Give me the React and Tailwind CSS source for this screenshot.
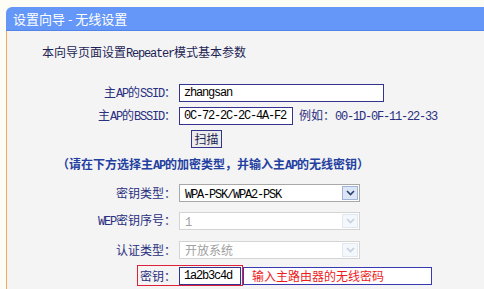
import React from "react";

// SimSun-like half-width latin: 6px per char
const M = ({ children }) => (
  <span className="font-['Liberation_Mono',monospace] text-[12px] tracking-[-1.2px]">{children}</span>
);

const Label = ({ children }) => (
  <div className="w-[172px] pr-[3px] text-right text-[#2a2f80] leading-[18px]">{children}</div>
);

const TextBox = ({ value, w }) => (
  <input
    readOnly
    value={value}
    className={`${w} h-[18px] border border-[#34348f] bg-white px-[4px] text-[12px] tracking-[-1.2px] leading-[16px] text-black font-['Liberation_Mono',monospace] outline-none`}
  />
);

const Arrow = ({ disabled }) => (
  <div
    className={`absolute right-[1px] top-[1px] bottom-[1px] w-[16px] flex items-center justify-center border ${
      disabled ? "border-[#e2e8f0] bg-[#f4f7fb]" : "border-[#9fb4d8] bg-[#dce6f5]"
    }`}
  >
    <svg width="9" height="6" viewBox="0 0 9 6">
      <path
        d="M1 1 L4.5 4.5 L8 1"
        fill="none"
        stroke={disabled ? "#c5cfdc" : "#2d3f6e"}
        strokeWidth="1.6"
      />
    </svg>
  </div>
);

const SelectBox = ({ children, disabled }) => (
  <div
    className={`relative w-[181px] h-[18px] border bg-white pl-[5px] text-[12px] leading-[16px] ${
      disabled ? "border-[#d4d4d4] text-[#a0a0a0]" : "border-[#a8a8a8] text-black"
    }`}
  >
    {children}
    <Arrow disabled={disabled} />
  </div>
);

export default function App() {
  return (
    <div className="w-[484px] h-[289px] overflow-hidden bg-[#fdfdf6] pt-[7px] pl-[6px] text-[12px] font-['Noto_Sans_CJK_SC',sans-serif]">
      <div className="h-[24px] rounded-tl-[6px] bg-[#6497f7] border-b border-[#5283e6] pl-[7px] flex items-center text-white text-[13px]">
        设置向导 - 无线设置
      </div>
      <div className="h-[260px] border-l border-[#f2ac5c] bg-[#f4f4f4] pt-[13px]">
        <div className="pl-[35px] leading-[16px] text-[#1d1f55]">
          本向导页面设置<M>Repeater</M>模式基本参数
        </div>

        <div className="mt-[21px] flex items-center">
          <Label>
            主<M>AP</M>的<M>SSID</M>：
          </Label>
          <TextBox value="zhangsan" w="w-[205px]" />
        </div>
        <div className="mt-[3px] flex items-center">
          <Label>
            主<M>AP</M>的<M>BSSID</M>：
          </Label>
          <TextBox value="0C-72-2C-2C-4A-F2" w="w-[114px]" />
          <span className="ml-[6px] text-[#2a2f80] leading-[18px]">
            例如：<M>00-1D-0F-11-22-33</M>
          </span>
        </div>
        <div className="mt-[4px] pl-[184px]">
          <button className="w-[31px] h-[18px] border border-[#34348f] bg-[#ebebeb] text-[12px] leading-[16px] text-[#1d1f55]">
            扫描
          </button>
        </div>

        <div className="mt-[8px] pl-[50px] leading-[16px] font-bold text-[#2340a0]">
          （请在下方选择主<M>AP</M>的加密类型，并输入主<M>AP</M>的无线密钥）
        </div>

        <div className="mt-[10px] flex items-center">
          <Label>密钥类型：</Label>
          <SelectBox>
            <M>WPA-PSK/WPA2-PSK</M>
          </SelectBox>
        </div>
        <div className="mt-[9px] flex items-center">
          <Label>
            <M>WEP</M>密钥序号：
          </Label>
          <SelectBox disabled>
            <M>1</M>
          </SelectBox>
        </div>
        <div className="mt-[10px] flex items-center">
          <Label>认证类型：</Label>
          <SelectBox disabled>开放系统</SelectBox>
        </div>

        <div className="mt-[6px] ml-[130px] flex items-center">
          <div className="h-[21px] border border-[#e0203a] flex items-center pr-[1px]">
            <div className="w-[40px] pr-[2px] text-right text-[#2a2f80] leading-[18px]">密钥：</div>
            <input
              readOnly
              value="1a2b3c4d"
              className="ml-[1px] w-[62px] h-[18px] border border-[#34348f] bg-white px-[4px] text-[12px] tracking-[-1.2px] leading-[16px] text-black font-['Liberation_Mono',monospace] outline-none"
            />
          </div>
          <div className="w-[189px] h-[18px] border border-[#3a3ab0] bg-white pl-[8px] leading-[16px] text-[#ee1c1c]">
            输入主路由器的无线密码
          </div>
        </div>
      </div>
    </div>
  );
}
